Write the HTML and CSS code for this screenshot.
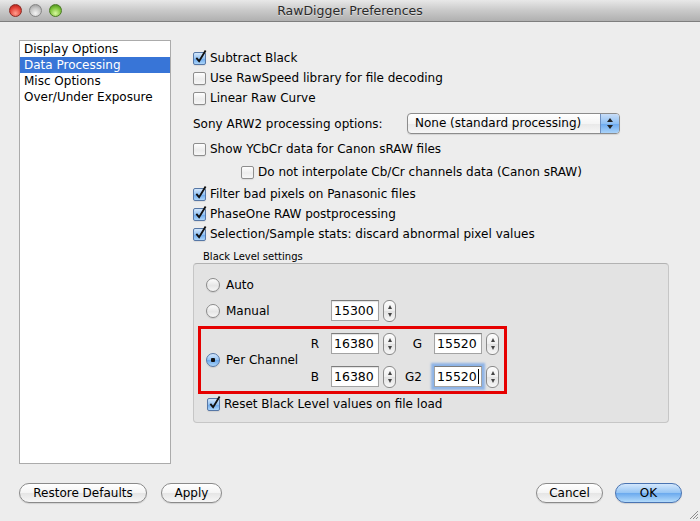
FILE: index.html
```html
<!DOCTYPE html>
<html lang="en">
<head>
    <meta charset="UTF-8">
    <title>RawDigger Preferences</title>
    <link rel="stylesheet" href="styles.css">
</head>
<body>

    <div class="window">
        <header class="titlebar">
            <div class="lights">
                <span class="light red"></span>
                <span class="light gray"></span>
                <span class="light green"></span>
            </div>
            <div class="title">RawDigger Preferences</div>
            <div></div>
        </header>

        <div class="main">
            <ul class="sidebar">
                <li>Display Options</li>
                <li class="selected">Data Processing</li>
                <li>Misc Options</li>
                <li>Over/Under Exposure</li>
            </ul>

            <div class="pane">
                <div class="check-row"><span class="cb checked"><svg class="tick" viewBox="0 0 14 16"><path d="M2.5 9.5 L5.5 13 L12.5 1.5"/></svg></span>Subtract Black</div>
                <div class="check-row"><span class="cb"></span>Use RawSpeed library for file decoding</div>
                <div class="check-row"><span class="cb"></span>Linear Raw Curve</div>

                <div class="sony-row">
                    <span class="sony-label">Sony ARW2 processing options:</span>
                    <div class="popup">
                        <span class="popup-text">None (standard processing)</span>
                        <span class="popup-arrows"><i class="arrow-up"></i><i class="arrow-down"></i></span>
                    </div>
                </div>

                <div class="check-row gap-5"><span class="cb"></span>Show YCbCr data for Canon sRAW files</div>
                <div class="check-row indent"><span class="cb"></span>Do not interpolate Cb/Cr channels data (Canon sRAW)</div>
                <div class="check-row gap-2"><span class="cb checked"><svg class="tick" viewBox="0 0 14 16"><path d="M2.5 9.5 L5.5 13 L12.5 1.5"/></svg></span>Filter bad pixels on Panasonic files</div>
                <div class="check-row"><span class="cb checked"><svg class="tick" viewBox="0 0 14 16"><path d="M2.5 9.5 L5.5 13 L12.5 1.5"/></svg></span>PhaseOne RAW postprocessing</div>
                <div class="check-row"><span class="cb checked"><svg class="tick" viewBox="0 0 14 16"><path d="M2.5 9.5 L5.5 13 L12.5 1.5"/></svg></span>Selection/Sample stats: discard abnormal pixel values</div>

                <div class="group-title">Black Level settings</div>
                <div class="group">
                    <div class="radio-row"><span class="radio"></span>Auto</div>

                    <div class="radio-row manual-row">
                        <span class="radio"></span>
                        <span class="radio-label">Manual</span>
                        <div class="textfield">15300</div>
                        <span class="stepper"><i class="arrow-up"></i><i class="arrow-down"></i></span>
                    </div>

                    <div class="channel-box">
                        <div class="channel-left">
                            <span class="radio on"></span>Per Channel
                        </div>
                        <div class="channel-grid">
                            <div class="field">
                                <span class="field-label">R</span>
                                <div class="textfield">16380</div>
                                <span class="stepper"><i class="arrow-up"></i><i class="arrow-down"></i></span>
                            </div>
                            <div class="field">
                                <span class="field-label">G</span>
                                <div class="textfield">15520</div>
                                <span class="stepper"><i class="arrow-up"></i><i class="arrow-down"></i></span>
                            </div>
                            <div class="field">
                                <span class="field-label">B</span>
                                <div class="textfield">16380</div>
                                <span class="stepper"><i class="arrow-up"></i><i class="arrow-down"></i></span>
                            </div>
                            <div class="field">
                                <span class="field-label">G2</span>
                                <div class="textfield focused">15520<span class="caret"></span></div>
                                <span class="stepper"><i class="arrow-up"></i><i class="arrow-down"></i></span>
                            </div>
                        </div>
                    </div>

                    <div class="check-row reset-row"><span class="cb checked"><svg class="tick" viewBox="0 0 14 16"><path d="M2.5 9.5 L5.5 13 L12.5 1.5"/></svg></span>Reset Black Level values on file load</div>
                </div>
            </div>
        </div>

        <div class="footer">
            <button class="btn restore">Restore Defaults</button>
            <button class="btn apply">Apply</button>
            <button class="btn cancel">Cancel</button>
            <button class="btn ok">OK</button>
        </div>

        <svg class="grip" viewBox="0 0 11 11">
            <path d="M10 2 L2 10 M10 5 L5 10 M10 8 L8 10"/>
        </svg>
    </div>

</body>
</html>
```

FILE: styles.css
```css
body {
    margin: 0;
    font-family: "DejaVu Sans", sans-serif;
    font-size: 12px;
    color: #000;
}

.window {
    position: relative;
    width: 700px;
    height: 521px;
    background-color: #ededed;
    display: flex;
    flex-direction: column;
    overflow: hidden;
}

/* title bar */
.titlebar {
    height: 21px;
    flex: none;
    border-bottom: 1px solid #7e7e7e;
    background: linear-gradient(#e8e8e8, #c9c9c9 50%, #b0b0b0);
    display: grid;
    grid-template-columns: 1fr auto 1fr;
    align-items: center;
}

.lights {
    display: flex;
    gap: 7px;
    padding-left: 9px;
}

.light {
    width: 13px;
    height: 13px;
    border-radius: 50%;
    box-sizing: border-box;
}

.red {
    background: radial-gradient(circle at 50% 75%, #ff9e8e, #e4453a 55%, #a8160e);
    border: 1px solid #8b2a22;
}

.gray {
    background: radial-gradient(circle at 50% 75%, #f4f4f4, #c4c4c4 55%, #8f8f8f);
    border: 1px solid #858585;
}

.green {
    background: radial-gradient(circle at 50% 75%, #d8f7a0, #7fc43c 55%, #3d7d12);
    border: 1px solid #4b7a24;
}

.title {
    font-size: 12.5px;
    color: #2a2a2a;
    text-shadow: 0 1px 0 rgba(255, 255, 255, 0.45);
}

/* content */
.main {
    display: flex;
    gap: 22px;
    padding: 18px 0 0 19px;
}

.sidebar {
    list-style: none;
    margin: 0;
    padding: 0;
    width: 152px;
    height: 424px;
    box-sizing: border-box;
    background-color: #fff;
    border: 1px solid #ababab;
}

.sidebar li {
    height: 16px;
    line-height: 16px;
    padding-left: 4px;
}

.sidebar li.selected {
    background-color: #3875d7;
    color: #fff;
}

.pane {
    width: 476px;
    padding-top: 8px;
}

.check-row {
    display: flex;
    align-items: center;
    gap: 4px;
    height: 20px;
}

.gap-5 {
    margin-top: 5px;
}

.gap-2 {
    margin-top: 2px;
}

.indent {
    margin-top: 3px;
    padding-left: 48px;
}

.cb {
    position: relative;
    flex: none;
    width: 13px;
    height: 13px;
    box-sizing: border-box;
    border: 1px solid #8e8e8e;
    border-radius: 2px;
    background: linear-gradient(#fefefe, #ececec 55%, #f7f7f7);
    box-shadow: 0 1px 1px rgba(0, 0, 0, 0.08);
}

.cb.checked {
    border-color: #5677a6;
    background: linear-gradient(#d3e6fb, #93c2f2 50%, #6aa7ec 51%, #acd5f9);
}

.tick {
    position: absolute;
    left: 0;
    top: -4px;
    width: 13px;
    height: 15px;
    fill: none;
    stroke: #111;
    stroke-width: 2;
}

/* popup */
.sony-row {
    display: flex;
    align-items: center;
    height: 21px;
    margin-top: 5px;
}

.sony-label {
    width: 214px;
}

.popup {
    width: 213px;
    height: 21px;
    box-sizing: border-box;
    display: flex;
    border: 1px solid #8c8c8c;
    border-radius: 4px;
    background: linear-gradient(#ffffff, #f5f5f5 50%, #e8e8e8 51%, #f6f6f6);
    box-shadow: 0 1px 1px rgba(0, 0, 0, 0.1);
}

.popup-text {
    flex: 1;
    padding-left: 7px;
    line-height: 19px;
}

.popup-arrows {
    width: 18px;
    border-left: 1px solid #6e8fbf;
    border-radius: 0 3px 3px 0;
    background: linear-gradient(#c8ddf8, #8fc0f3 50%, #6aa8ee 51%, #aad3f9);
    display: flex;
    flex-direction: column;
    align-items: center;
    justify-content: center;
    gap: 3px;
}

.arrow-up {
    width: 0;
    height: 0;
    border-left: 3px solid transparent;
    border-right: 3px solid transparent;
    border-bottom: 4px solid #222;
}

.arrow-down {
    width: 0;
    height: 0;
    border-left: 3px solid transparent;
    border-right: 3px solid transparent;
    border-top: 4px solid #222;
}

/* black level group */
.group-title {
    font-size: 10px;
    line-height: 13px;
    margin: 6px 0 0 10px;
}

.group {
    height: 160px;
    box-sizing: border-box;
    padding: 11px 0 8px 12px;
    border: 1px solid #c6c6c6;
    border-top-color: #b2b2b2;
    border-radius: 4px;
    background-color: #e3e3e3;
}

.radio-row {
    display: flex;
    align-items: center;
    height: 20px;
}

.radio {
    flex: none;
    width: 14px;
    height: 14px;
    box-sizing: border-box;
    margin-right: 6px;
    border: 1px solid #8a8a8a;
    border-radius: 50%;
    background: linear-gradient(#fdfdfd, #e6e6e6 55%, #f6f6f6);
    box-shadow: 0 1px 1px rgba(0, 0, 0, 0.1);
}

.radio.on {
    border-color: #5677a6;
    background: radial-gradient(circle, #111 2px, transparent 2.5px),
                linear-gradient(#d3e6fb, #93c2f2 50%, #6aa7ec 51%, #acd5f9);
}

.manual-row {
    height: 21px;
    margin-top: 5px;
}

.radio-label {
    width: 105px;
}

.textfield {
    width: 48px;
    height: 21px;
    box-sizing: border-box;
    padding-left: 2px;
    line-height: 20px;
    font-size: 12.5px;
    border: 1px solid #a3a3a3;
    border-top-color: #7c7c7c;
    background-color: #fff;
    box-shadow: inset 0 1px 1px rgba(0, 0, 0, 0.12);
}

.textfield.focused {
    box-shadow: 0 0 0 1px #8cb4e8, 0 0 2px 3px rgba(118, 164, 229, 0.75);
}

.caret {
    display: inline-block;
    width: 1px;
    height: 15px;
    margin-left: 1px;
    vertical-align: -3px;
    background-color: #000;
}

.stepper {
    flex: none;
    width: 13px;
    height: 22px;
    box-sizing: border-box;
    margin-left: 4px;
    border: 1px solid #8a8a8a;
    border-radius: 6px;
    background: linear-gradient(#fdfdfd, #eeeeee 50%, #e2e2e2 51%, #f7f7f7);
    display: flex;
    flex-direction: column;
    align-items: center;
    justify-content: space-between;
    padding: 4px 0;
}

.stepper .arrow-up,
.stepper .arrow-down {
    border-left-width: 2.5px;
    border-right-width: 2.5px;
}

.stepper .arrow-up {
    border-bottom: 4px solid #444;
}

.stepper .arrow-down {
    border-top: 4px solid #444;
}

.channel-box {
    display: flex;
    align-items: center;
    width: 309px;
    height: 68px;
    box-sizing: border-box;
    margin: 5px 0 0 -8px;
    padding-left: 5px;
    border: 3px solid #e60000;
}

.channel-left {
    display: flex;
    align-items: center;
    width: 93px;
}

.channel-grid {
    display: grid;
    grid-template-columns: auto auto;
    column-gap: 6px;
    row-gap: 11px;
}

.field {
    display: flex;
    align-items: center;
}

.field-label {
    width: 20px;
    margin-right: 12px;
    text-align: right;
}

.reset-row {
    padding-left: 1px;
}

/* bottom buttons */
.footer {
    display: flex;
    padding: 19px 18px 0 19px;
}

.btn {
    height: 20px;
    box-sizing: border-box;
    padding: 0;
    font-family: "DejaVu Sans", sans-serif;
    font-size: 12px;
    color: #000;
    border: 1px solid #8a8a8a;
    border-radius: 10px;
    background: linear-gradient(#ffffff, #f4f4f4 50%, #e5e5e5 51%, #f6f6f6);
    box-shadow: 0 1px 1px rgba(0, 0, 0, 0.12);
}

.restore {
    width: 128px;
}

.apply {
    width: 61px;
    margin-left: 14px;
}

.cancel {
    width: 67px;
    margin-left: auto;
}

.ok {
    width: 67px;
    margin-left: 12px;
    border-color: #4a74b2;
    background: linear-gradient(#d3e7fc, #94c4f4 50%, #6aa9ee 51%, #b3dbfb);
}

.grip {
    position: absolute;
    right: 1px;
    bottom: 1px;
    width: 11px;
    height: 11px;
    fill: none;
    stroke: #8d8d8d;
    stroke-width: 1;
}
```
